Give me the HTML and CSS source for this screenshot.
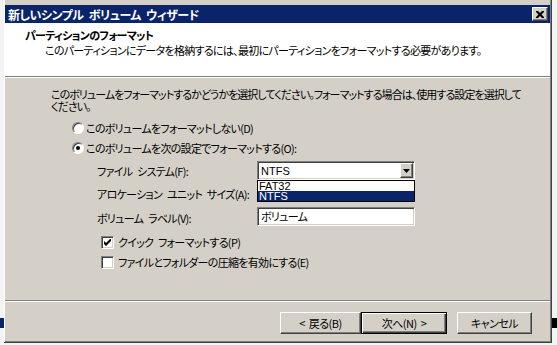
FILE: index.html
```html
<!DOCTYPE html>
<html lang="ja">

<head>
    <meta charset="UTF-8">
    <title>新しいシンプル ボリューム ウィザード</title>
    <link rel="stylesheet" href="styles.css">
</head>

<body>
<div class="window">
    <div class="frame">
        <div class="titlebar">
            <span class="titlebar__text">新しいシンプル ボリューム ウィザード</span>
            <span class="titlebar__close">
                <svg width="8" height="7" viewBox="0 0 8 7">
                    <path d="M0 0h2l2 2 2-2h2v1l-2.5 2.5 2.5 2.5v1h-2l-2-2-2 2h-2v-1l2.5-2.5-2.5-2.5z" fill="#000" />
                </svg>
            </span>
        </div>

        <div class="header">
            <div class="header__title">パーティションのフォーマット</div>
            <div class="header__sub">このパーティションにデータを格納するには、最初にパーティションをフォーマットする必要があります。</div>
        </div>

        <div class="content">
            <div class="intro">
                <span class="intro__line">このボリュームをフォーマットするかどうかを選択してください。フォーマットする場合は、使用する設定を選択して</span>
                <span class="intro__line">ください。</span>
            </div>

            <div class="option option--first">
                <span class="radio"></span>
                <span>このボリュームをフォーマットしない(D)</span>
            </div>
            <div class="option">
                <span class="radio radio--on"></span>
                <span>このボリュームを次の設定でフォーマットする(O):</span>
            </div>

            <div class="settings">
                <div class="settings__label">ファイル システム(F):</div>
                <div class="combo">
                    <span class="combo__value">NTFS</span>
                    <span class="combo__arrow">
                        <svg width="7" height="4" viewBox="0 0 7 4"><path d="M0 0h7L3.5 4z" fill="#000" /></svg>
                    </span>
                    <ul class="combo__list">
                        <li>FAT32</li>
                        <li class="is-selected">NTFS</li>
                    </ul>
                </div>

                <div class="settings__label">アロケーション ユニット サイズ(A):</div>
                <div></div>

                <div class="settings__label settings__label--low">ボリューム ラベル(V):</div>
                <div class="textbox">ボリューム</div>
            </div>

            <div class="check-row check-row--first">
                <span class="check">
                    <svg width="7" height="7" viewBox="0 0 7 7"><path d="M0 2v3l2 2 5-5v-3l-5 5z" fill="#000" /></svg>
                </span>
                <span>クイック フォーマットする(P)</span>
            </div>
            <div class="check-row">
                <span class="check"></span>
                <span>ファイルとフォルダーの圧縮を有効にする(E)</span>
            </div>
        </div>

        <div class="footer">
            <button class="btn">&lt;&nbsp; 戻る(B)</button>
            <button class="btn btn--default">次へ(N)&nbsp; &gt;</button>
            <button class="btn btn--cancel">キャンセル</button>
        </div>
    </div>
</div>

<div class="desk-blue"></div>
<div class="desk-black"></div>
</body>

</html>
```

FILE: styles.css
```css
body {
  margin: 0;
  padding: 0;
  width: 557px;
  height: 345px;
  overflow: hidden;
  background-color: #F4F4F4;
  font-family: "Noto Sans CJK JP", sans-serif;
  font-size: 11px;
  font-feature-settings: "palt";
  letter-spacing: -0.7px;
  word-spacing: 3px;
  color: #000000;
}

.window {
  width: 552px;
  height: 343px;
  box-sizing: border-box;
  padding: 0 0 0 4px;
  background-color: #F4F4F4;
}

.frame {
  height: 100%;
  box-sizing: border-box;
  padding: 5px 1px 0 1px;
  background-color: #D4D0C8;
  border-right: 1px solid #404040;
  border-bottom: 1px solid #404040;
  box-shadow: inset 1px 0 #FFFFFF, inset -1px -1px #808080;
  display: flex;
  flex-direction: column;
}

/* title bar */

.titlebar {
  height: 18px;
  display: flex;
  align-items: center;
  justify-content: space-between;
  padding: 0 2px 0 3px;
  background-color: #0A246A;
  color: #FFFFFF;
  font-weight: 700;
  font-size: 12px;
  letter-spacing: -0.5px;
}

.titlebar__close {
  width: 16px;
  height: 14px;
  box-sizing: border-box;
  display: flex;
  align-items: center;
  justify-content: center;
  background-color: #D4D0C8;
  border: 1px solid;
  border-color: #FFFFFF #404040 #404040 #FFFFFF;
  box-shadow: inset -1px -1px #808080;
}

/* header */

.header {
  height: 54px;
  box-sizing: border-box;
  padding: 5px 0 0 20px;
  background-color: #FFFFFF;
  border-bottom: 1px solid #808080;
  box-shadow: 0 1px #FFFFFF;
}

.header__title {
  font-weight: 700;
  line-height: 14px;
}

.header__sub {
  margin-left: 20px;
  line-height: 16px;
}

/* content */

.content {
  flex: 1;
  padding: 10px 0 0 46px;
  border-bottom: 1px solid #808080;
  box-shadow: 0 1px #FFFFFF;
  margin-top: 1px;
}

.intro {
  letter-spacing: -0.95px;
  white-space: nowrap;
}

.intro__line {
  display: block;
  height: 12px;
  line-height: 12px;
}

.option {
  display: flex;
  align-items: center;
  gap: 2px;
  height: 20px;
  margin-left: 21px;
}

.option--first {
  margin-top: 6px;
}

.radio {
  width: 12px;
  height: 12px;
  box-sizing: border-box;
  border-radius: 50%;
  background-color: #FFFFFF;
  border: 1px solid;
  border-color: #808080 #FFFFFF #FFFFFF #808080;
  box-shadow: inset 1px 1px #404040;
  display: flex;
  align-items: center;
  justify-content: center;
}

.radio--on::after {
  content: "";
  width: 4px;
  height: 4px;
  border-radius: 50%;
  background-color: #000000;
}

.settings {
  display: grid;
  grid-template-columns: 160px 158px;
  grid-template-rows: 19px 21px 19px;
  row-gap: 3px;
  align-items: center;
  margin: 3px 0 0 46px;
}

.settings__label {
  white-space: nowrap;
  padding-top: 1px;
}

.settings__label--low {
  padding-top: 3px;
}

.combo {
  position: relative;
  height: 19px;
  box-sizing: border-box;
  display: flex;
  align-items: center;
  justify-content: space-between;
  padding: 0 1px 0 3px;
  background-color: #FFFFFF;
  border: 1px solid;
  border-color: #808080 #FFFFFF #FFFFFF #808080;
  box-shadow: inset 1px 1px #404040, inset -1px -1px #D4D0C8;
}

.combo__value {
  font-family: "Liberation Sans", Arial, sans-serif;
  font-size: 11px;
  letter-spacing: 0;
}

.combo__arrow {
  width: 13px;
  height: 15px;
  box-sizing: border-box;
  display: flex;
  align-items: center;
  justify-content: center;
  background-color: #D4D0C8;
  border: 1px solid;
  border-color: #FFFFFF #404040 #404040 #FFFFFF;
  box-shadow: inset -1px -1px #808080;
}

.combo__list {
  position: absolute;
  top: 18px;
  left: -1px;
  right: -1px;
  margin: 0;
  padding: 0;
  list-style: none;
  background-color: #FFFFFF;
  border: 1px solid #000000;
  font-family: "Liberation Sans", Arial, sans-serif;
  font-size: 11px;
  letter-spacing: 0;
  line-height: 10px;
}

.combo__list li {
  padding: 0 0 0 1px;
}

.combo__list .is-selected {
  background-color: #0A246A;
  color: #FFFFFF;
}

.textbox {
  height: 19px;
  box-sizing: border-box;
  padding: 0 3px;
  line-height: 17px;
  background-color: #FFFFFF;
  border: 1px solid;
  border-color: #808080 #FFFFFF #FFFFFF #808080;
  box-shadow: inset 1px 1px #404040, inset -1px -1px #D4D0C8;
}

.check-row {
  display: flex;
  align-items: center;
  gap: 4px;
  height: 20px;
  margin-left: 50px;
}

.check-row--first {
  margin-top: 6px;
}

.check {
  width: 13px;
  height: 13px;
  box-sizing: border-box;
  display: flex;
  align-items: center;
  justify-content: center;
  background-color: #FFFFFF;
  border: 1px solid;
  border-color: #808080 #FFFFFF #FFFFFF #808080;
  box-shadow: inset 1px 1px #404040, inset -1px -1px #D4D0C8;
}

/* buttons */

.footer {
  height: 40px;
  box-sizing: border-box;
  display: flex;
  align-items: flex-start;
  padding: 10px 0 0 275px;
  margin-top: 1px;
}

.btn {
  width: 81px;
  height: 22px;
  padding: 0;
  font-family: "Noto Sans CJK JP", sans-serif;
  font-size: 11px;
  font-feature-settings: "palt";
  letter-spacing: -0.5px;
  color: #000000;
  background-color: #D4D0C8;
  border: 1px solid;
  border-color: #FFFFFF #404040 #404040 #FFFFFF;
  box-shadow: inset -1px -1px #808080;
}

.btn--default {
  width: 86px;
  border: 1px solid #000000;
  box-shadow: inset 1px 1px #FFFFFF, inset -1px -1px #404040, inset -2px -2px #808080;
}

.btn--cancel {
  width: 75px;
  margin-left: 10px;
}

.desk-blue {
  position: absolute;
  left: 0;
  top: 318px;
  width: 4px;
  height: 10px;
  background-color: #0A246A;
}

.desk-black {
  position: absolute;
  left: 552px;
  top: 318px;
  width: 5px;
  height: 10px;
  background-color: #000000;
}
```
